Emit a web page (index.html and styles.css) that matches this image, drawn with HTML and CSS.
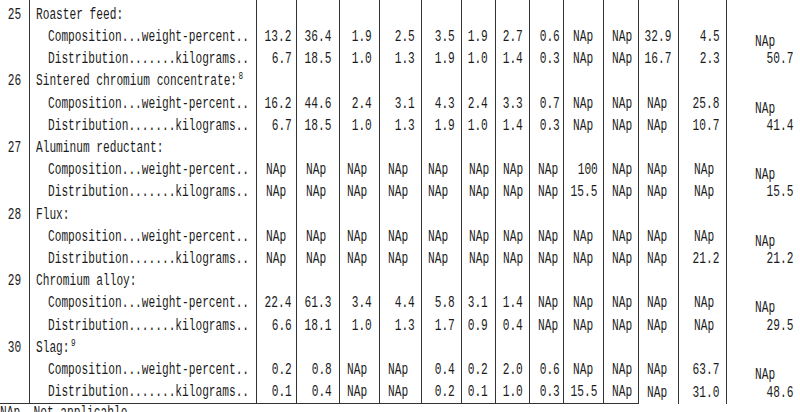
FILE: index.html
```html
<!DOCTYPE html>
<html lang="en">
<head>
<meta charset="utf-8">
<title>Material balance table</title>
<link rel="stylesheet" href="styles.css">
</head>
<body>
<table class="sheet">
<colgroup>
<col class="w-num"><col class="w-lab"><col class="w40"><col class="w43"><col class="w40"><col class="w42"><col class="w40"><col class="w34"><col class="w34"><col class="w34"><col class="w40"><col class="w35"><col class="w40"><col class="w48"><col class="w74">
</colgroup>
<tbody>
<tr class="h first"><td class="num"><span>25</span></td><td class="lab"><span>Roaster feed:</span></td><td></td><td></td><td></td><td></td><td></td><td></td><td></td><td></td><td></td><td></td><td></td><td></td><td></td></tr>
<tr class="c"><td class="num"></td><td class="lab sub"><span>Composition...weight-percent..</span></td><td><span>13.2</span></td><td><span>36.4</span></td><td><span>1.9</span></td><td><span>2.5</span></td><td><span>3.5</span></td><td><span>1.9</span></td><td><span>2.7</span></td><td><span>0.6</span></td><td class="na"><span>NAp</span></td><td class="na"><span>NAp</span></td><td><span>32.9</span></td><td><span>4.5</span></td><td class="na"><span>NAp</span></td></tr>
<tr class="d"><td class="num"></td><td class="lab sub"><span>Distribution.......kilograms..</span></td><td><span>6.7</span></td><td><span>18.5</span></td><td><span>1.0</span></td><td><span>1.3</span></td><td><span>1.9</span></td><td><span>1.0</span></td><td><span>1.4</span></td><td><span>0.3</span></td><td class="na"><span>NAp</span></td><td class="na"><span>NAp</span></td><td><span>16.7</span></td><td><span>2.3</span></td><td><span>50.7</span></td></tr>

<tr class="h"><td class="num"><span>26</span></td><td class="lab"><span>Sintered chromium concentrate:<sup>8</sup></span></td><td></td><td></td><td></td><td></td><td></td><td></td><td></td><td></td><td></td><td></td><td></td><td></td><td></td></tr>
<tr class="c"><td class="num"></td><td class="lab sub"><span>Composition...weight-percent..</span></td><td><span>16.2</span></td><td><span>44.6</span></td><td><span>2.4</span></td><td><span>3.1</span></td><td><span>4.3</span></td><td><span>2.4</span></td><td><span>3.3</span></td><td><span>0.7</span></td><td class="na"><span>NAp</span></td><td class="na"><span>NAp</span></td><td class="na"><span>NAp</span></td><td><span>25.8</span></td><td class="na"><span>NAp</span></td></tr>
<tr class="d"><td class="num"></td><td class="lab sub"><span>Distribution.......kilograms..</span></td><td><span>6.7</span></td><td><span>18.5</span></td><td><span>1.0</span></td><td><span>1.3</span></td><td><span>1.9</span></td><td><span>1.0</span></td><td><span>1.4</span></td><td><span>0.3</span></td><td class="na"><span>NAp</span></td><td class="na"><span>NAp</span></td><td class="na"><span>NAp</span></td><td><span>10.7</span></td><td><span>41.4</span></td></tr>

<tr class="h"><td class="num"><span>27</span></td><td class="lab"><span>Aluminum reductant:</span></td><td></td><td></td><td></td><td></td><td></td><td></td><td></td><td></td><td></td><td></td><td></td><td></td><td></td></tr>
<tr class="c"><td class="num"></td><td class="lab sub"><span>Composition...weight-percent..</span></td><td class="na"><span>NAp</span></td><td class="na"><span>NAp</span></td><td class="na"><span>NAp</span></td><td class="na"><span>NAp</span></td><td class="na"><span>NAp</span></td><td class="na"><span>NAp</span></td><td class="na"><span>NAp</span></td><td class="na"><span>NAp</span></td><td><span>100</span></td><td class="na"><span>NAp</span></td><td class="na"><span>NAp</span></td><td class="na"><span>NAp</span></td><td class="na"><span>NAp</span></td></tr>
<tr class="d"><td class="num"></td><td class="lab sub"><span>Distribution.......kilograms..</span></td><td class="na"><span>NAp</span></td><td class="na"><span>NAp</span></td><td class="na"><span>NAp</span></td><td class="na"><span>NAp</span></td><td class="na"><span>NAp</span></td><td class="na"><span>NAp</span></td><td class="na"><span>NAp</span></td><td class="na"><span>NAp</span></td><td><span>15.5</span></td><td class="na"><span>NAp</span></td><td class="na"><span>NAp</span></td><td class="na"><span>NAp</span></td><td><span>15.5</span></td></tr>

<tr class="h"><td class="num"><span>28</span></td><td class="lab"><span>Flux:</span></td><td></td><td></td><td></td><td></td><td></td><td></td><td></td><td></td><td></td><td></td><td></td><td></td><td></td></tr>
<tr class="c"><td class="num"></td><td class="lab sub"><span>Composition...weight-percent..</span></td><td class="na"><span>NAp</span></td><td class="na"><span>NAp</span></td><td class="na"><span>NAp</span></td><td class="na"><span>NAp</span></td><td class="na"><span>NAp</span></td><td class="na"><span>NAp</span></td><td class="na"><span>NAp</span></td><td class="na"><span>NAp</span></td><td class="na"><span>NAp</span></td><td class="na"><span>NAp</span></td><td class="na"><span>NAp</span></td><td class="na"><span>NAp</span></td><td class="na"><span>NAp</span></td></tr>
<tr class="d"><td class="num"></td><td class="lab sub"><span>Distribution.......kilograms..</span></td><td class="na"><span>NAp</span></td><td class="na"><span>NAp</span></td><td class="na"><span>NAp</span></td><td class="na"><span>NAp</span></td><td class="na"><span>NAp</span></td><td class="na"><span>NAp</span></td><td class="na"><span>NAp</span></td><td class="na"><span>NAp</span></td><td class="na"><span>NAp</span></td><td class="na"><span>NAp</span></td><td class="na"><span>NAp</span></td><td><span>21.2</span></td><td><span>21.2</span></td></tr>

<tr class="h"><td class="num"><span>29</span></td><td class="lab"><span>Chromium alloy:</span></td><td></td><td></td><td></td><td></td><td></td><td></td><td></td><td></td><td></td><td></td><td></td><td></td><td></td></tr>
<tr class="c"><td class="num"></td><td class="lab sub"><span>Composition...weight-percent..</span></td><td><span>22.4</span></td><td><span>61.3</span></td><td><span>3.4</span></td><td><span>4.4</span></td><td><span>5.8</span></td><td><span>3.1</span></td><td><span>1.4</span></td><td class="na"><span>NAp</span></td><td class="na"><span>NAp</span></td><td class="na"><span>NAp</span></td><td class="na"><span>NAp</span></td><td class="na"><span>NAp</span></td><td class="na"><span>NAp</span></td></tr>
<tr class="d"><td class="num"></td><td class="lab sub"><span>Distribution.......kilograms..</span></td><td><span>6.6</span></td><td><span>18.1</span></td><td><span>1.0</span></td><td><span>1.3</span></td><td><span>1.7</span></td><td><span>0.9</span></td><td><span>0.4</span></td><td class="na"><span>NAp</span></td><td class="na"><span>NAp</span></td><td class="na"><span>NAp</span></td><td class="na"><span>NAp</span></td><td class="na"><span>NAp</span></td><td><span>29.5</span></td></tr>

<tr class="h"><td class="num"><span>30</span></td><td class="lab"><span>Slag:<sup>9</sup></span></td><td></td><td></td><td></td><td></td><td></td><td></td><td></td><td></td><td></td><td></td><td></td><td></td><td></td></tr>
<tr class="c"><td class="num"></td><td class="lab sub"><span>Composition...weight-percent..</span></td><td><span>0.2</span></td><td><span>0.8</span></td><td class="na"><span>NAp</span></td><td class="na"><span>NAp</span></td><td><span>0.4</span></td><td><span>0.2</span></td><td><span>2.0</span></td><td><span>0.6</span></td><td class="na"><span>NAp</span></td><td class="na"><span>NAp</span></td><td class="na"><span>NAp</span></td><td><span>63.7</span></td><td class="na"><span>NAp</span></td></tr>
<tr class="d last"><td class="num"></td><td class="lab sub"><span>Distribution.......kilograms..</span></td><td><span>0.1</span></td><td><span>0.4</span></td><td class="na"><span>NAp</span></td><td class="na"><span>NAp</span></td><td><span>0.2</span></td><td><span>0.1</span></td><td><span>1.0</span></td><td><span>0.3</span></td><td><span>15.5</span></td><td class="na"><span>NAp</span></td><td class="na"><span>NAp</span></td><td><span>31.0</span></td><td><span>48.6</span></td></tr>
</tbody>
</table>
<p class="foot"><span>NAp  Not applicable.</span></p>
</body>
</html>
```

FILE: styles.css
```css
html, body {
  margin: 0;
  padding: 0;
  background: #ffffff;
  overflow: hidden;
}

body {
  width: 800px;
  height: 412px;
  font-family: "Liberation Mono", "DejaVu Sans Mono", monospace;
  font-size: 16px;
  color: #1c1c1c;
}

.sheet {
  border-collapse: collapse;
  table-layout: fixed;
  width: 800px;
}

.w-num { width: 29px; }
.w-lab { width: 227px; }
.w34 { width: 34px; }
.w35 { width: 35px; }
.w40 { width: 40px; }
.w42 { width: 42px; }
.w43 { width: 43px; }
.w48 { width: 48px; }
.w74 { width: 74px; }

.sheet td {
  padding: 0 var(--pr, 0) 0 0;
  height: 22.2px;
  line-height: 22.2px;
  white-space: nowrap;
  text-align: right;
  vertical-align: middle;
  border-right: 1px solid #333333;
  overflow: visible;
}

.sheet td:last-child {
  border-right: none;
}

.sheet tr.first td {
  height: 26px;
  vertical-align: bottom;
}

.sheet tr.last td:nth-child(-n+12) {
  border-bottom: 1px solid #333333;
}

/* condensed typewriter look */
.sheet span,
.foot span {
  display: inline-block;
  transform: scaleX(0.698);
  transform-origin: 100% 50%;
  margin-left: -14px;
}

.sheet td.num { --pr: 7px; }

.sheet td.lab {
  text-align: left;
  padding: 0 0 0 6px;
}
.sheet td.lab.sub {
  padding-left: 18px;
}
.sheet td.lab span,
.sheet td.na span,
.foot span {
  transform-origin: 0 50%;
  margin-left: 0;
}

sup {
  font-size: 11px;
  line-height: 0;
  vertical-align: 6px;
  margin-left: 2px;
}

/* per-column right padding for figures and left inset for NAp */
.sheet td:nth-child(3)  { --pr: 4px; --pl: 9px; }
.sheet td:nth-child(4)  { --pr: 7px; --pl: 9px; }
.sheet td:nth-child(5)  { --pr: 7px; --pl: 7px; }
.sheet td:nth-child(6)  { --pr: 6px; --pl: 8px; }
.sheet td:nth-child(7)  { --pr: 6px; --pl: 6px; }
.sheet td:nth-child(8)  { --pr: 7px; --pl: 7px; }
.sheet td:nth-child(9)  { --pr: 6px; --pl: 7px; }
.sheet td:nth-child(10) { --pr: 3px; --pl: 8px; }
.sheet td:nth-child(11) { --pr: 5px; --pl: 9px; }
.sheet td:nth-child(12) { --pr: 6px; --pl: 8px; }
.sheet td:nth-child(13) { --pr: 6px; --pl: 8px; }
.sheet td:nth-child(14) { --pr: 6px; --pl: 15px; }
.sheet td:nth-child(15) { --pr: 7px; --pl: 28px; }

.sheet td.na {
  text-align: left;
  padding: 0 0 0 var(--pl, 8px);
}

.sheet td.na:last-child span {
  transform: translateY(5px) scaleX(0.698);
}

.foot {
  margin: 1px 0 0 0;
  line-height: 16px;
  white-space: pre;
  color: #1c1c1c;
}
```
